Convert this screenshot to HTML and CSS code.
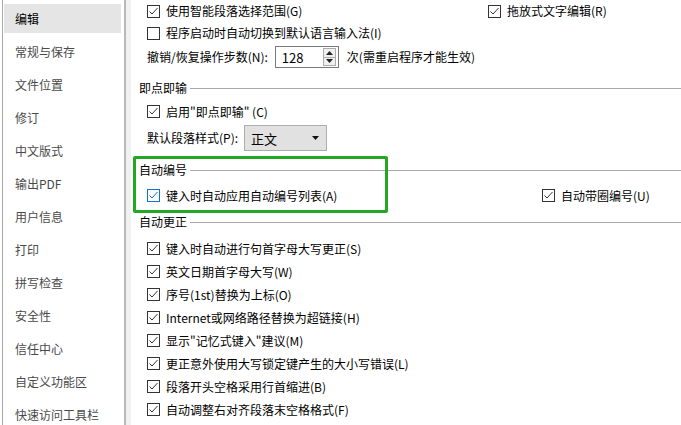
FILE: index.html
```html
<!DOCTYPE html>
<html lang="zh-CN">
<head>
<meta charset="utf-8">
<title>选项 - 编辑</title>
<link rel="stylesheet" href="styles.css">
</head>
<body>
<div class="window">
  <nav class="sidebar">
    <div class="nav-item active">编辑</div>
    <div class="nav-item">常规与保存</div>
    <div class="nav-item">文件位置</div>
    <div class="nav-item">修订</div>
    <div class="nav-item">中文版式</div>
    <div class="nav-item">输出PDF</div>
    <div class="nav-item">用户信息</div>
    <div class="nav-item">打印</div>
    <div class="nav-item">拼写检查</div>
    <div class="nav-item">安全性</div>
    <div class="nav-item">信任中心</div>
    <div class="nav-item">自定义功能区</div>
    <div class="nav-item">快速访问工具栏</div>
  </nav>
  <div class="gutter"></div>
  <main class="content">
    <div class="row">
      <label class="check w-first"><svg class="box" viewBox="0 0 13 13"><rect x="0.5" y="0.5" width="12" height="12" fill="#fff" stroke="#333"/><path d="M2.5 6.5 L5 9 L10.5 3" fill="none" stroke="#333"/></svg>使用智能段落选择范围(G)</label>
      <label class="check"><svg class="box" viewBox="0 0 13 13"><rect x="0.5" y="0.5" width="12" height="12" fill="#fff" stroke="#333"/><path d="M2.5 6.5 L5 9 L10.5 3" fill="none" stroke="#333"/></svg>拖放式文字编辑(R)</label>
    </div>
    <div class="row">
      <label class="check"><svg class="box" viewBox="0 0 13 13"><rect x="0.5" y="0.5" width="12" height="12" fill="#fff" stroke="#333"/></svg>程序启动时自动切换到默认语言输入法(I)</label>
    </div>
    <div class="row row-spin">
      <span class="field-label">撤销/恢复操作步数(N):</span>
      <div class="spinner">
        <span class="spin-value">128</span>
        <div class="spin-btns">
          <span class="spin-btn"><svg viewBox="0 0 7 4" width="7" height="4"><path d="M0 4 L3.5 0 L7 4 Z" fill="#222"/></svg></span>
          <span class="spin-btn"><svg viewBox="0 0 7 4" width="7" height="4"><path d="M0 0 L7 0 L3.5 4 Z" fill="#222"/></svg></span>
        </div>
      </div>
      <span class="field-note">次(需重启程序才能生效)</span>
    </div>

    <section class="section sec-click">
      <div class="sec-title">即点即输</div>
      <div class="row">
        <label class="check"><svg class="box" viewBox="0 0 13 13"><rect x="0.5" y="0.5" width="12" height="12" fill="#fff" stroke="#333"/><path d="M2.5 6.5 L5 9 L10.5 3" fill="none" stroke="#333"/></svg>启用"即点即输" (C)</label>
      </div>
      <div class="row row-select">
        <span class="field-label">默认段落样式(P):</span>
        <div class="select">
          <span class="select-value">正文</span>
          <svg class="select-arrow" viewBox="0 0 7 4" width="7" height="4"><path d="M0 0 L7 0 L3.5 4 Z" fill="#111"/></svg>
        </div>
      </div>
    </section>

    <section class="section sec-number">
      <div class="highlight"></div>
      <div class="sec-title">自动编号</div>
      <div class="sec-body">
        <div class="row">
          <label class="check w-number"><svg class="box" viewBox="0 0 13 13"><rect x="0.5" y="0.5" width="12" height="12" fill="#fff" stroke="#0a74d6"/><path d="M2.5 6.5 L5 9 L10.5 3" fill="none" stroke="#0a74d6"/></svg>键入时自动应用自动编号列表(A)</label>
          <label class="check"><svg class="box" viewBox="0 0 13 13"><rect x="0.5" y="0.5" width="12" height="12" fill="#fff" stroke="#333"/><path d="M2.5 6.5 L5 9 L10.5 3" fill="none" stroke="#333"/></svg>自动带圈编号(U)</label>
        </div>
      </div>
    </section>

    <section class="section sec-correct">
      <div class="sec-title">自动更正</div>
      <div class="sec-body list">
        <div class="row row-list"><label class="check"><svg class="box" viewBox="0 0 13 13"><rect x="0.5" y="0.5" width="12" height="12" fill="#fff" stroke="#333"/><path d="M2.5 6.5 L5 9 L10.5 3" fill="none" stroke="#333"/></svg>键入时自动进行句首字母大写更正(S)</label></div>
        <div class="row row-list"><label class="check"><svg class="box" viewBox="0 0 13 13"><rect x="0.5" y="0.5" width="12" height="12" fill="#fff" stroke="#333"/><path d="M2.5 6.5 L5 9 L10.5 3" fill="none" stroke="#333"/></svg>英文日期首字母大写(W)</label></div>
        <div class="row row-list"><label class="check"><svg class="box" viewBox="0 0 13 13"><rect x="0.5" y="0.5" width="12" height="12" fill="#fff" stroke="#333"/><path d="M2.5 6.5 L5 9 L10.5 3" fill="none" stroke="#333"/></svg>序号(1st)替换为上标(O)</label></div>
        <div class="row row-list"><label class="check"><svg class="box" viewBox="0 0 13 13"><rect x="0.5" y="0.5" width="12" height="12" fill="#fff" stroke="#333"/><path d="M2.5 6.5 L5 9 L10.5 3" fill="none" stroke="#333"/></svg>Internet或网络路径替换为超链接(H)</label></div>
        <div class="row row-list"><label class="check"><svg class="box" viewBox="0 0 13 13"><rect x="0.5" y="0.5" width="12" height="12" fill="#fff" stroke="#333"/><path d="M2.5 6.5 L5 9 L10.5 3" fill="none" stroke="#333"/></svg>显示"记忆式键入"建议(M)</label></div>
        <div class="row row-list"><label class="check"><svg class="box" viewBox="0 0 13 13"><rect x="0.5" y="0.5" width="12" height="12" fill="#fff" stroke="#333"/><path d="M2.5 6.5 L5 9 L10.5 3" fill="none" stroke="#333"/></svg>更正意外使用大写锁定键产生的大小写错误(L)</label></div>
        <div class="row row-list"><label class="check"><svg class="box" viewBox="0 0 13 13"><rect x="0.5" y="0.5" width="12" height="12" fill="#fff" stroke="#333"/><path d="M2.5 6.5 L5 9 L10.5 3" fill="none" stroke="#333"/></svg>段落开头空格采用行首缩进(B)</label></div>
        <div class="row row-list"><label class="check"><svg class="box" viewBox="0 0 13 13"><rect x="0.5" y="0.5" width="12" height="12" fill="#fff" stroke="#333"/><path d="M2.5 6.5 L5 9 L10.5 3" fill="none" stroke="#333"/></svg>自动调整右对齐段落末空格格式(F)</label></div>
      </div>
    </section>
  </main>
</div>
</body>
</html>
```

FILE: styles.css
```css
* { box-sizing: border-box; }

html, body {
  margin: 0;
  padding: 0;
}

body {
  width: 681px;
  height: 425px;
  overflow: hidden;
  background: #fff;
  color: #000;
  font-family: "Noto Sans CJK SC", "Noto Sans", sans-serif;
  font-size: 12px;
  line-height: 1;
}

.window {
  display: flex;
  height: 425px;
}

/* Sidebar */
.sidebar {
  flex: 0 0 auto;
  margin-left: 2px;
  width: 117px;
  padding: 4px 3px 0 1px;
  border-left: 1px solid #a9a9a9;
  border-right: 2px solid #b9b9b9;
  box-sizing: content-box;
}

.nav-item {
  height: 29px;
  margin-bottom: 4px;
  padding-left: 11px;
  display: flex;
  align-items: center;
  color: #4a4a4a;
  white-space: nowrap;
}

.nav-item.active {
  background: #e5e5e5;
  color: #000;
}

.gutter {
  flex: 0 0 5px;
  background: #f1f1f1;
}

/* Content */
.content {
  flex: 1;
  padding-left: 8px;
  min-width: 0;
}

.row {
  display: flex;
  align-items: center;
  height: 22px;
  padding-left: 8px;
  white-space: nowrap;
}

.check {
  display: flex;
  align-items: center;
  gap: 6px;
}

.box {
  width: 13px;
  height: 13px;
  flex: 0 0 13px;
}

.w-first { width: 341px; }
.w-number { width: 395px; }

/* spinner row */
.row-spin { height: 26px; }

.field-label { margin-right: 7px; }

.spinner {
  display: flex;
  align-items: center;
  width: 64px;
  height: 22px;
  border: 1px solid #7a7a7a;
  background: #fff;
  padding-left: 6px;
  padding-right: 2px;
}

.spin-value {
  flex: 1;
  font-size: 13px;
}

.spin-btns {
  display: flex;
  flex-direction: column;
  width: 13px;
  height: 18px;
  border: 1px solid #acacac;
  background: #f0f0f0;
}

.spin-btn {
  flex: 1;
  display: flex;
  align-items: center;
  justify-content: center;
}

.spin-btn + .spin-btn {
  border-top: 1px solid #acacac;
}

.field-note { margin-left: 8px; }

/* sections */
.section { position: relative; }

.sec-title {
  display: flex;
  align-items: center;
  gap: 3px;
  height: 24px;
  white-space: nowrap;
}

.sec-title::after {
  content: "";
  flex: 1;
  height: 1px;
  background: #a8a8a8;
}

.sec-click { margin-top: 6px; }
.sec-click .row { height: 23px; }
.sec-click .row-select { height: 30px; }

.select {
  display: flex;
  align-items: center;
  justify-content: space-between;
  width: 83px;
  height: 26px;
  padding: 0 7px 0 6px;
  background: #e1e1e1;
  border: 1px solid #adadad;
  margin-left: -1px;
}

.select-value { font-size: 13px; }

.sec-number { margin-top: 5px; }
.sec-number .sec-body { padding-top: 2px; }
.sec-number .row { height: 23px; }

.highlight {
  position: absolute;
  left: -6px;
  top: -2px;
  width: 255px;
  height: 57px;
  border: 3px solid #22a822;
  border-radius: 2px;
  pointer-events: none;
}

.sec-correct { margin-top: 3px; }
.sec-correct .sec-body { padding-top: 3px; }
.row-list { height: 23px; }
```
